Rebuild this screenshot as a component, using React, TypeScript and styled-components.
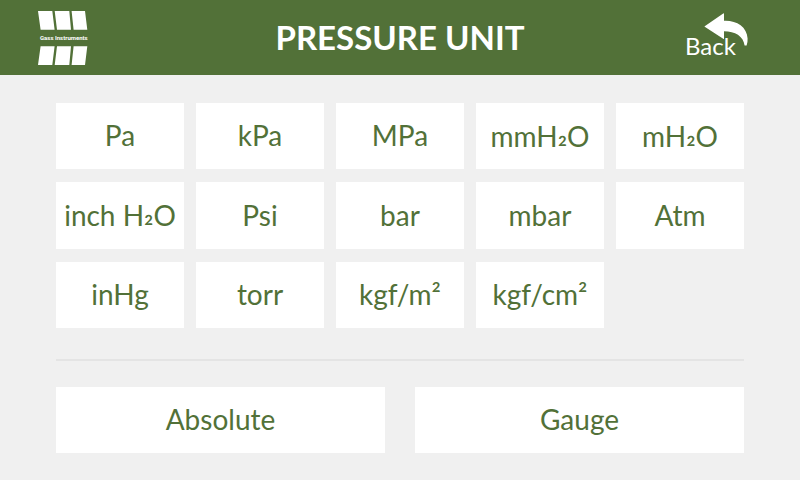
import type { ReactNode } from "react";
import styled, { createGlobalStyle } from "styled-components";

const GlobalStyle = createGlobalStyle`
  *, *::before, *::after { box-sizing: border-box; }
  body {
    margin: 0;
    background: #f0f0f0;
    font-family: Lato, "Noto Sans", sans-serif;
  }
`;

const Header = styled.header`
  display: grid;
  grid-template-columns: 1fr auto 1fr;
  align-items: center;
  height: 75px;
  padding: 0 38px;
  background: #527138;
  color: #fff;
`;

const Logo = styled.svg`
  display: block;
  width: 50px;
  height: 54px;
`;

const LogoText = styled.text`
  font: bold 6px Roboto, "Liberation Sans", sans-serif;
`;

const Title = styled.h1`
  margin: 0;
  padding-bottom: 2px;
  font-size: 33px;
  line-height: 40px;
  font-weight: 700;
`;

const BackButton = styled.button`
  position: relative;
  justify-self: end;
  width: 63px;
  height: 49px;
  margin-right: 14px;
  padding: 18px 0 2px;
  border: 0;
  background: none;
  color: inherit;
  font: inherit;
  font-size: 24px;
  line-height: 28px;
  text-align: left;
  cursor: pointer;
`;

const BackArrow = styled.svg`
  position: absolute;
  top: 0;
  right: 0;
  width: 44px;
  height: 34px;
`;

const Main = styled.main`
  padding: 28px 56px 27px;
`;

const UnitGrid = styled.div`
  display: grid;
  grid-template-columns: repeat(5, minmax(0, 1fr));
  grid-template-rows: 66px 67px 66px;
  gap: 13px 12px;
`;

const Divider = styled.hr`
  height: 2px;
  margin: 31px 0 26px;
  border: 0;
  background: #e4e4e4;
`;

const ReferenceGrid = styled.div`
  display: grid;
  grid-template-columns: repeat(2, minmax(0, 1fr));
  grid-auto-rows: 66px;
  gap: 30px;
`;

const OptionButton = styled.button`
  padding: 0 0 2px;
  border: 0;
  background: #fff;
  color: #527138;
  font: inherit;
  font-size: 28px;
  line-height: 34px;
  white-space: nowrap;
  cursor: pointer;
`;

const Subscript = styled.span`
  vertical-align: 4px;
  line-height: 1;
`;

const water = <>H<Subscript>₂</Subscript>O</>;

const units: { id: string; label: ReactNode }[] = [
  { id: "pa", label: "Pa" },
  { id: "kpa", label: "kPa" },
  { id: "mpa", label: "MPa" },
  { id: "mmh2o", label: <>mm{water}</> },
  { id: "mh2o", label: <>m{water}</> },
  { id: "inh2o", label: <>inch {water}</> },
  { id: "psi", label: "Psi" },
  { id: "bar", label: "bar" },
  { id: "mbar", label: "mbar" },
  { id: "atm", label: "Atm" },
  { id: "inhg", label: "inHg" },
  { id: "torr", label: "torr" },
  { id: "kgfm2", label: "kgf/m²" },
  { id: "kgfcm2", label: "kgf/cm²" },
];

const references = ["Absolute", "Gauge"];

export default function App() {
  return (
    <>
      <GlobalStyle />
      <Header>
        <Logo viewBox="0 0 50 54" fill="currentColor" role="img" aria-label="Gass Instruments">
          <path d="M0 0H14.3L16.6 18.7H2.6ZM16.7 0H31.3L33 18.7H19ZM33.6 0H47L49.3 18.7H35.6Z" />
          <LogoText x="2" y="29">Gass Instruments</LogoText>
          <path d="M2.6 35.2H16.6L14.3 54H0ZM19 35.2H33L31.3 54H16.7ZM35.6 35.2H49.3L47 54H33.6Z" />
        </Logo>
        <Title>PRESSURE UNIT</Title>
        <BackButton type="button">
          <BackArrow viewBox="0 0 44 34" fill="currentColor" aria-hidden="true">
            <path d="M.7 13.2L19.2.5Q20 0 20 1V7.8C32 7.2 43 13.5 43.6 25.5Q43.8 29 42.6 32.5H40.6C39.4 23 31 18.3 20 18.2V25.4Q20 26.4 19.2 25.8L.7 13.8Q.2 13.5.7 13.2Z" />
          </BackArrow>
          Back
        </BackButton>
      </Header>
      <Main>
        <UnitGrid role="group" aria-label="Pressure units">
          {units.map(({ id, label }) => (
            <OptionButton type="button" key={id}>{label}</OptionButton>
          ))}
        </UnitGrid>
        <Divider />
        <ReferenceGrid role="group" aria-label="Pressure reference">
          {references.map((reference) => (
            <OptionButton type="button" key={reference}>{reference}</OptionButton>
          ))}
        </ReferenceGrid>
      </Main>
    </>
  );
}
